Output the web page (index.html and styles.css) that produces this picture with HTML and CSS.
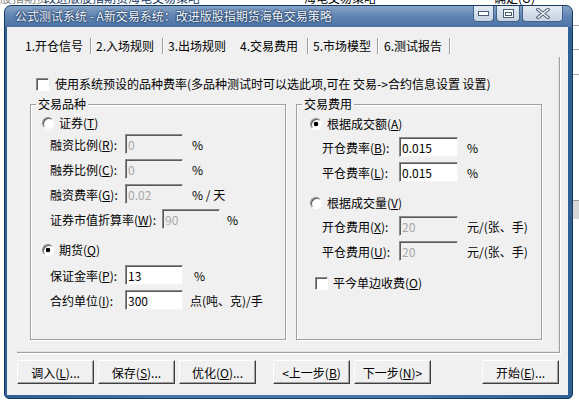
FILE: index.html
```html
<!DOCTYPE html>
<html lang="zh-CN">
<head>
    <meta charset="UTF-8">
    <title>公式测试系统</title>
    <link rel="stylesheet" href="styles.css">
</head>
<body>
<div class="desktop">
    <div class="bg-top">
        <span class="bg-a">股指期货</span><span class="bg-b">改进版股指期货海龟交易策略</span><span class="bg-c">海龟交易策略</span><span class="bg-d">确定(O)</span>
    </div>
    <div class="bg-right">
        <i class="rule r1"></i>
        <i class="rule r2"></i>
        <i class="rule r3"></i>
        <i class="block"></i>
    </div>

    <div class="window">
        <div class="titlebar">
            <span class="title">公式测试系统 - A新交易系统：改进版股指期货海龟交易策略</span>
            <div class="controls">
                <span class="ctl">
                    <svg width="11" height="6" viewBox="0 0 11 6"><rect x="0.5" y="0.5" width="10" height="4" fill="#fff" stroke="#4b5d75"/></svg>
                </span>
                <span class="ctl ctl-max">
                    <svg width="11" height="9" viewBox="0 0 11 9"><rect x="0.5" y="0.5" width="10" height="8" fill="#fff" stroke="#4b5d75"/><rect x="2.5" y="3.5" width="6" height="3" fill="none" stroke="#4b5d75"/></svg>
                </span>
                <span class="ctl ctl-close">
                    <svg width="14" height="11" viewBox="0 0 14 11"><path d="M2 1.5 L12 9.5 M12 1.5 L2 9.5" stroke="#4b5d75" stroke-width="3.4" stroke-linecap="square"/><path d="M2 1.5 L12 9.5 M12 1.5 L2 9.5" stroke="#fff" stroke-width="1.4" stroke-linecap="square"/></svg>
                </span>
            </div>
        </div>

        <div class="client">
            <div class="tabs">
                <span class="tab t1">1.开仓信号</span><i class="sep"></i>
                <span class="tab t2">2.入场规则</span><i class="sep"></i>
                <span class="tab t3">3.出场规则</span>
                <span class="tab t4 active">4.交易费用</span><i class="sep"></i>
                <span class="tab t5">5.市场模型</span><i class="sep"></i>
                <span class="tab t6">6.测试报告</span><i class="sep"></i>
            </div>

            <div class="page">
                <label class="check-row top-check">
                    <input type="checkbox" class="box">
                    <span>使用系统预设的品种费率(多品种测试时可以选此项,可在 交易-&gt;合约信息设置 设置)</span>
                </label>

                <div class="groups">
                    <div class="group group-kind">
                        <span class="group-title">交易品种</span>

                        <label class="radio-row">
                            <input type="radio" name="kind" class="radio">
                            <span>证券(<u>T</u>)</span>
                        </label>
                        <div class="field first">
                            <span class="lbl">融资比例(<u>R</u>):</span>
                            <input class="edit" value="0" disabled>
                            <span class="unit">%</span>
                        </div>
                        <div class="field">
                            <span class="lbl">融券比例(<u>C</u>):</span>
                            <input class="edit" value="0" disabled>
                            <span class="unit">%</span>
                        </div>
                        <div class="field">
                            <span class="lbl">融资费率(<u>G</u>):</span>
                            <input class="edit" value="0.02" disabled>
                            <span class="unit">% / 天</span>
                        </div>
                        <div class="field">
                            <span class="lbl lbl-wide">证券市值折算率(<u>W</u>):</span>
                            <input class="edit" value="90" disabled>
                            <span class="unit unit-near">%</span>
                        </div>

                        <label class="radio-row second">
                            <input type="radio" name="kind" class="radio" checked>
                            <span>期货(<u>Q</u>)</span>
                        </label>
                        <div class="field after-radio">
                            <span class="lbl">保证金率(<u>P</u>):</span>
                            <input class="edit" value="13">
                            <span class="unit unit-far">%</span>
                        </div>
                        <div class="field">
                            <span class="lbl">合约单位(<u>I</u>):</span>
                            <input class="edit" value="300">
                            <span class="unit unit-near">点(吨、克)/手</span>
                        </div>
                    </div>

                    <div class="group group-fee">
                        <span class="group-title">交易费用</span>

                        <label class="radio-row">
                            <input type="radio" name="fee" class="radio" checked>
                            <span>根据成交额(<u>A</u>)</span>
                        </label>
                        <div class="field first">
                            <span class="lbl">开仓费率(<u>B</u>):</span>
                            <input class="edit" value="0.015">
                            <span class="unit">%</span>
                        </div>
                        <div class="field">
                            <span class="lbl">平仓费率(<u>L</u>):</span>
                            <input class="edit" value="0.015">
                            <span class="unit">%</span>
                        </div>

                        <label class="radio-row second">
                            <input type="radio" name="fee" class="radio">
                            <span>根据成交量(<u>V</u>)</span>
                        </label>
                        <div class="field first">
                            <span class="lbl">开仓费用(<u>X</u>):</span>
                            <input class="edit" value="20" disabled>
                            <span class="unit">元/(张、手)</span>
                        </div>
                        <div class="field">
                            <span class="lbl">平仓费用(<u>U</u>):</span>
                            <input class="edit" value="20" disabled>
                            <span class="unit">元/(张、手)</span>
                        </div>

                        <label class="check-row fee-check">
                            <input type="checkbox" class="box">
                            <span>平今单边收费(<u>O</u>)</span>
                        </label>
                    </div>
                </div>
            </div>

            <div class="buttons">
                <button class="btn">调入(<u>L</u>)...</button>
                <button class="btn">保存(<u>S</u>)...</button>
                <button class="btn">优化(<u>O</u>)...</button>
                <button class="btn btn-prev">&lt;上一步(<u>B</u>)</button>
                <button class="btn">下一步(<u>N</u>)&gt;</button>
                <button class="btn btn-start">开始(<u>E</u>)...</button>
            </div>
        </div>
    </div>
</div>
</body>
</html>
```

FILE: styles.css
```css
body {
    margin: 0;
    font-family: "Noto Sans CJK SC", sans-serif;
    font-size: 12px;
    color: #000;
    background: #fff;
}
.desktop {
    position: relative;
    width: 579px;
    height: 405px;
    overflow: hidden;
    background: #fff;
}

/* stuff of the window behind */
.bg-top {
    position: absolute;
    top: -9px;
    left: 0;
    white-space: nowrap;
    line-height: 14px;
}
.bg-top span {
    display: inline-block;
}
.bg-a {
    width: 40px;
    color: #888;
}
.bg-b {
    width: 260px;
    padding-left: 4px;
    color: #203a66;
}
.bg-c {
    width: 180px;
}
.bg-d {
    padding-left: 10px;
}
.bg-right {
    position: absolute;
    top: 0;
    left: 573px;
    width: 6px;
    height: 405px;
    display: flex;
    flex-direction: column;
}
.rule {
    display: block;
    height: 1px;
    background: #a9a9a9;
}
.r1 { margin-top: 25px; }
.r2 { margin-top: 23px; }
.r3 { margin-top: 24px; }
.block {
    display: block;
    height: 18px;
    margin-top: 125px;
    background: #d8d8d8;
    border-top: 1px solid #999;
}

/* dialog */
.window {
    position: absolute;
    left: 4px;
    top: 5px;
    width: 569px;
    height: 394px;
    box-sizing: border-box;
    display: flex;
    flex-direction: column;
    background: linear-gradient(to right, #2f5f95, #4a77aa 30%, #4a77aa 70%, #2f5f95);
    border: 1px solid #173a63;
    border-radius: 7px 7px 5px 5px;
    padding-bottom: 3px;
}
.titlebar {
    height: 21px;
    display: flex;
    padding-left: 10px;
    background: linear-gradient(to bottom, #87a4c8, #5f84b2 50%, #4c74a5);
    border-radius: 6px 6px 0 0;
}
.title {
    line-height: 20px;
    color: #f4f8fc;
    white-space: nowrap;
    text-shadow: 0 0 2px #1a355c, 0 0 2px #1a355c, 0 0 1px #1a355c;
}
.controls {
    margin-left: auto;
    margin-right: 9px;
    display: flex;
    gap: 2px;
}
.ctl {
    width: 21px;
    height: 16px;
    box-sizing: border-box;
    display: flex;
    align-items: center;
    justify-content: center;
    background: linear-gradient(to bottom, #e4ebf3, #c5d3e3);
    border: 1px solid #44618a;
    border-top: none;
    border-radius: 0 0 4px 4px;
}
.ctl-max {
    width: 24px;
}
.ctl-close {
    width: 41px;
}

.client {
    flex: 1;
    margin: 0 4px 0 2px;
    padding: 8px 8px 0 10px;
    background: #f0f0f0;
    display: flex;
    flex-direction: column;
}

/* tabs */
.tabs {
    height: 22px;
    display: flex;
    align-items: center;
    white-space: nowrap;
}
.tab {
    box-sizing: border-box;
    line-height: 16px;
}
.t1 { width: 73px; padding-left: 8px; }
.t2 { width: 70px; padding-left: 4px; }
.t3 { width: 70px; padding-left: 4px; }
.t4 { width: 73px; padding-left: 6px; }
.t5 { width: 68px; padding-left: 4px; }
.t6 { width: 70px; padding-left: 5px; }
.sep {
    width: 0;
    height: 16px;
    border-left: 1px solid #9a9a9a;
    border-right: 1px solid #fff;
}

/* page */
.page {
    height: 296px;
    box-sizing: border-box;
    padding: 20px 0 0 16px;
    border-right: 1px solid #a0a0a0;
    border-bottom: 1px solid #a0a0a0;
    box-shadow: inset -1px -1px 0 #e2e2e2, 1px 1px 0 #fff;
}
.check-row,
.radio-row {
    display: flex;
    align-items: center;
    height: 14px;
    line-height: 14px;
    white-space: nowrap;
}
.top-check {
    margin-left: 3px;
    gap: 6px;
}
.box {
    appearance: none;
    margin: 0;
    width: 13px;
    height: 13px;
    box-sizing: border-box;
    background: #fff;
    border: 1px solid;
    border-color: #8a8a8a #fff #fff #8a8a8a;
    box-shadow: inset 1px 1px 0 #5a5a5a;
}
.radio {
    appearance: none;
    margin: 0;
    width: 12px;
    height: 12px;
    box-sizing: border-box;
    border-radius: 50%;
    background: #fff;
    border: 1px solid;
    border-color: #8a8a8a #fff #fff #8a8a8a;
    box-shadow: inset 1px 1px 0 #5a5a5a;
}
.radio:checked {
    background: radial-gradient(circle, #000 0 2px, #fff 2.6px);
}
.radio-row {
    gap: 5px;
}

.groups {
    display: flex;
    margin: 13px 0 0 -3px;
}
.group {
    position: relative;
    height: 236px;
    box-sizing: border-box;
    border: 1px solid #a0a0a0;
    box-shadow: inset 1px 1px 0 #fff, 1px 1px 0 #fff;
}
.group-title {
    position: absolute;
    top: -8px;
    left: 5px;
    padding: 0 2px;
    line-height: 14px;
    background: #f0f0f0;
}
.group-kind {
    width: 256px;
    margin-right: 10px;
    padding: 11px 0 0 11px;
}
.group-fee {
    width: 246px;
    padding: 12px 0 0 13px;
}

.field {
    display: flex;
    align-items: center;
    height: 20px;
    margin-top: 5px;
    white-space: nowrap;
}
.group-kind .field {
    margin-left: 8px;
}
.group-fee .field {
    margin-left: 12px;
}
.field.first {
    margin-top: 4px;
}
.group-fee .field.first {
    margin-top: 6px;
}
.radio-row.second {
    margin-top: 14px;
}
.field.after-radio {
    margin-top: 8px;
}
.lbl {
    width: 75px;
}
.group-fee .lbl {
    width: 77px;
}
.lbl-wide {
    width: 112px;
}
.edit {
    width: 58px;
    height: 20px;
    box-sizing: border-box;
    margin: 0;
    padding: 0 0 0 2px;
    font: inherit;
    color: #000;
    background: #fff;
    border: 1px solid;
    border-color: #8a8a8a #f4f4f4 #f4f4f4 #8a8a8a;
    box-shadow: inset 1px 1px 0 #5a5a5a;
    outline: none;
}
.group-fee .edit {
    width: 59px;
}
.edit:disabled {
    color: #a8a8a8;
    background: #f0f0f0;
}
.unit {
    margin-left: 9px;
}
.unit-near {
    margin-left: 7px;
}
.unit-far {
    margin-left: 11px;
}
.fee-check {
    margin: 15px 0 0 5px;
    gap: 5px;
}

/* bottom buttons */
.buttons {
    display: flex;
    margin-top: 7px;
}
.btn {
    width: 77px;
    height: 24px;
    margin: 0 4px 0 0;
    padding: 0;
    font: inherit;
    color: #000;
    background: #f0f0f0;
    border: 1px solid;
    border-color: #fff #404040 #404040 #fff;
    box-shadow: inset -1px -1px 0 #a0a0a0;
}
.btn u {
    text-decoration: underline;
}
.btn-prev {
    margin-left: 13px;
}
.btn-start {
    margin: 0 1px 0 auto;
}
```
